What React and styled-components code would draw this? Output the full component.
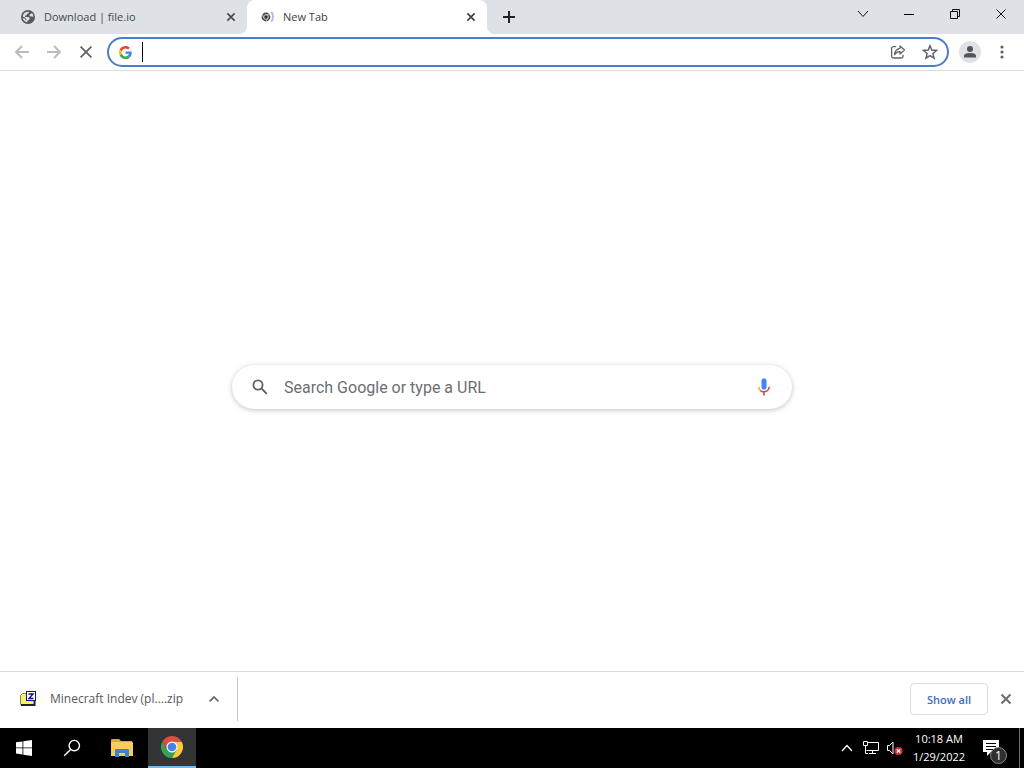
import React from "react";
import styled, { createGlobalStyle } from "styled-components";

const uiFont = '"Open Sans", "Noto Sans", sans-serif';

const GlobalStyle = createGlobalStyle`
  *, *::before, *::after { box-sizing: border-box; }
  body { margin: 0; background: #fff; font-family: ${uiFont}; }
  button, input { font: inherit; }
  svg { display: block; flex: none; }
`;

const Desktop = styled.div`
  display: flex;
  flex-direction: column;
  min-height: 100vh;
`;

const PlainButton = styled.button`
  display: flex;
  align-items: center;
  justify-content: center;
  flex: none;
  padding: 0;
  border: 0;
  background: transparent;
  color: inherit;
`;

/* Tab strip */
const TabStrip = styled.header`
  display: flex;
  height: 34px;
  background: #dee1e6;
  color: #202124;
`;

const Tab = styled.div`
  position: relative;
  display: flex;
  align-items: center;
  gap: 8px;
  flex: 0 1 ${(p) => (p.$active ? "240px" : "247px")};
  min-width: 0;
  padding: 0 8px 0 ${(p) => (p.$active ? "12px" : "20px")};
  border-radius: 8px 8px 0 0;
  background: ${(p) => (p.$active ? "#fff" : "transparent")};
  color: ${(p) => (p.$active ? "#3c4043" : "#45494d")};

  &::before, &::after {
    content: ${(p) => (p.$active ? '""' : "none")};
    position: absolute;
    bottom: 0;
    width: 8px;
    height: 8px;
  }
  &::before {
    left: -8px;
    background: radial-gradient(circle at 0 0, transparent 8px, #fff 8px);
  }
  &::after {
    right: -8px;
    background: radial-gradient(circle at 100% 0, transparent 8px, #fff 8px);
  }
`;

const TabTitle = styled.span`
  flex: 1;
  overflow: hidden;
  white-space: nowrap;
  font-size: 11px;
  line-height: 16px;
`;

const TabClose = styled(PlainButton)`
  width: 16px;
  height: 16px;
`;

const NewTabButton = styled(PlainButton)`
  width: 28px;
  height: 34px;
  margin-left: 8px;
`;

const WindowControls = styled.div`
  display: flex;
  margin-left: auto;
`;

const WindowButton = styled(PlainButton)`
  width: 46px;
  height: 28px;
  color: #111;
`;

/* Toolbar */
const Toolbar = styled.nav`
  display: flex;
  align-items: center;
  height: 37px;
  padding: 0 6px;
  border-bottom: 1px solid #dcdcdf;
  color: #5f6368;
`;

const ToolButton = styled(PlainButton)`
  width: 32px;
  height: 28px;
  color: ${(p) => (p.$dim ? "#babcbe" : "#5f6368")};
`;

const Omnibox = styled.div`
  display: flex;
  align-items: center;
  flex: 1;
  min-width: 0;
  height: 30px;
  margin: 0 5px;
  padding: 0 1px 0 10px;
  border: 2px solid #4c7ccb;
  border-radius: 15px;
`;

const Caret = styled.span`
  width: 1px;
  height: 20px;
  margin-left: 10px;
  background: #000;
`;

const AddressInput = styled.input`
  flex: 1;
  min-width: 0;
  border: 0;
  outline: 0;
  background: transparent;
  font-size: 14px;
`;

const Avatar = styled(PlainButton)`
  width: 22px;
  height: 22px;
  margin: 0 5px;
  border-radius: 50%;
  background: #dee1e6;
`;

/* New tab page */
const Page = styled.main`
  display: flex;
  align-items: center;
  justify-content: center;
  flex: 1;
  padding: 32px 24px 0;
`;

const SearchBox = styled.form`
  display: flex;
  align-items: center;
  width: 100%;
  max-width: 560px;
  height: 44px;
  padding: 0 18px 0 20px;
  border-radius: 22px;
  background: #fff;
  box-shadow: 0 1px 5px rgba(32, 33, 36, 0.28);
  color: #5f6368;
`;

const SearchInput = styled.input`
  flex: 1;
  min-width: 0;
  padding: 0 16px;
  border: 0;
  outline: 0;
  background: transparent;
  font-family: Roboto, sans-serif;
  font-size: 16px;
  &::placeholder { color: #6b6f73; opacity: 1; }
`;

/* Downloads */
const DownloadShelf = styled.section`
  display: flex;
  align-items: center;
  height: 57px;
  padding: 0 8px 2px 20px;
  border-top: 1px solid #dadce0;
`;

const DownloadItem = styled.div`
  display: flex;
  align-items: center;
  height: 44px;
  padding-right: 13px;
  border-right: 1px solid #c6c8cb;
  color: #5f6368;
`;

const FileName = styled.span`
  width: 138px;
  margin-left: 13px;
  white-space: nowrap;
  font-size: 12px;
  line-height: 18px;
  color: #55585c;
`;

const ItemMenu = styled(PlainButton)`
  width: 20px;
  height: 20px;
  margin-left: 16px;
`;

const ShowAll = styled.button`
  width: 78px;
  height: 32px;
  margin-left: auto;
  padding: 0;
  border: 1px solid #dadce0;
  border-radius: 4px;
  background: #fff;
  color: #3f6bbd;
  font-size: 11px;
  font-weight: 600;
`;

const ShelfClose = styled(PlainButton)`
  width: 20px;
  height: 20px;
  margin-left: 8px;
  color: #6a6d70;
`;

/* Taskbar */
const Taskbar = styled.footer`
  display: flex;
  height: 40px;
  background: #000;
  color: #fff;
`;

const TaskButton = styled(PlainButton)`
  width: ${(p) => (p.$wide ? "52px" : "48px")};
  height: 40px;
  background: ${(p) => (p.$active ? "#333435" : "transparent")};
  border-bottom: ${(p) => (p.$active ? "2px solid #76b9ed" : "0")};
`;

const Tray = styled.div`
  display: flex;
  align-items: center;
  margin-left: auto;
`;

const TrayButton = styled(PlainButton)`
  width: 24px;
  height: 40px;
`;

const Clock = styled.time`
  width: 64px;
  text-align: center;
  font-size: 11px;
  line-height: 18px;
  white-space: nowrap;
`;

const Notifications = styled(PlainButton)`
  position: relative;
  width: 48px;
  height: 40px;
  padding-right: 8px;
`;

const Count = styled.span`
  position: absolute;
  right: 12px;
  bottom: 4px;
  width: 17px;
  height: 17px;
  border: 1px solid #8a8a8a;
  border-radius: 50%;
  background: #303030;
  font-size: 12px;
  line-height: 15px;
`;

const DesktopEdge = styled(PlainButton)`
  width: 5px;
  height: 40px;
  border-left: 1px solid #6a6a6a;
`;

const Cross = ({ size = 8, weight = 2 }) => (
  <svg width={size} height={size} viewBox="0 0 10 10" fill="none" stroke="currentColor" strokeWidth={weight} overflow="visible">
    <path d="M.5.5l9 9M9.5.5l-9 9" />
  </svg>
);

const Globe = () => (
  <svg width="16" height="16" viewBox="0 0 16 16">
    <circle cx="8" cy="8" r="7" fill="#55585c" />
    <path d="M3 6.2C4 3.6 6.400 2.600 9 2.900L8.600 4.300 6.900 4.900 6.600 6.300 5 6.800 5.200 8H8.600L9.900 9.300 8.900 11 7.600 11.600 7.300 13.200C4.700 12.900 3 10.900 2.700 8.700L4.900 9.700 5.800 11.400 6.500 10.300 4.500 8.200 3 7.700z" fill="#dee1e6" />
    <path d="M10.600 4.700l1.500-.4c.9.900 1.300 2.100 1.300 3.400l-1.700-.3-1.800-.2-.5-1.200z" fill="#dee1e6" />
  </svg>
);

const LoadingChrome = () => (
  <svg width="16" height="16" viewBox="0 0 16 16" fill="none">
    <circle cx="7" cy="8" r="4.400" fill="#484b50" />
    <circle cx="7" cy="8" r="2.300" stroke="#d5d7db" strokeWidth=".9" />
    <circle cx="7" cy="8" r="1.200" fill="#292c30" />
    <path d="M7 5.700h4M5 9L3.300 6.200M9 9l-2 3.200" stroke="#d5d7db" strokeWidth=".8" />
    <path d="M12.200 3c2.300 2.300 2.400 7 .1 9.700" stroke="#b3b8ed" strokeWidth="1.800" />
  </svg>
);

const Arrow = ({ forward }) => (
  <svg width="16" height="16" viewBox="0 0 16 16" fill="none" stroke="currentColor" strokeWidth="2">
    <path d={forward ? "M1 8h13M8 2l6 6-6 6" : "M15 8H2M8 2L2 8l6 6"} />
  </svg>
);

const GoogleG = () => (
  <svg width="13" height="13" viewBox="0 0 48 48">
    <path fill="#ea4335" d="M24 9.5c3.5 0 6.7 1.2 9.2 3.6l6.9-6.9C35.9 2.4 30.5 0 24 0 14.6 0 6.5 5.4 2.6 13.2l8 6.2C12.4 13.7 17.7 9.5 24 9.5z" />
    <path fill="#4285f4" d="M47 24.6c0-1.6-.2-3.1-.4-4.6H24v9h12.9a11 11 0 0 1-4.8 7.2l7.7 6c4.6-4.2 7.2-10.4 7.2-17.6z" />
    <path fill="#fbbc05" d="M10.5 28.6a14.5 14.5 0 0 1 0-9.2l-8-6.2A24 24 0 0 0 0 24c0 3.9.9 7.5 2.6 10.8z" />
    <path fill="#34a853" d="M24 48c6.5 0 11.9-2.1 15.900-5.800l-7.700-6A14 14 0 0 1 24 38.500c-6.300 0-11.600-4.200-13.500-9.900l-7.900 6.200A24 24 0 0 0 24 48z" />
  </svg>
);

const Share = () => (
  <svg width="16" height="16" viewBox="0 0 16 16" fill="none" stroke="currentColor" strokeWidth="1.3" strokeLinejoin="round">
    <path d="M6.2 2.6H3.400a1.800 1.800 0 0 0-1.800 1.800v7.800A1.800 1.800 0 0 0 3.400 14h7.800a1.800 1.800 0 0 0 1.800-1.800v-1.500" />
    <path d="M10 2l4.500 4-4.500 4V7.700C7.600 7.600 6 8.500 4.500 10.700 4.800 7.600 6.400 5 10 4.400z" />
  </svg>
);

const Star = () => (
  <svg width="16" height="16" viewBox="0 0 16 16" fill="none" stroke="currentColor" strokeWidth="1.5">
    <path d="M8 1.8l1.8 4.3 4.7.4-3.6 3 1.1 4.6L8 11.6l-4 2.5 1.1-4.6-3.6-3 4.7-.4z" />
  </svg>
);

const Person = () => (
  <svg width="14" height="14" viewBox="0 0 14 14" fill="#50545b">
    <circle cx="7" cy="4" r="3" />
    <path d="M1 12.5v-1.8C1 8.6 4.6 8 7 8s6 .6 6 2.7v1.8z" />
  </svg>
);

const Microphone = () => (
  <svg width="20" height="20" viewBox="0 0 20 20" fill="none">
    <rect x="7.5" y="1.5" width="5" height="11" rx="2" fill="#4285f4" />
    <path d="M4.8 9.8c0 1.5.5 2.8 1.5 3.8" stroke="#fbbc04" strokeWidth="1.6" />
    <path d="M6.2 13.5c2.5 2.3 8.5 1.8 9-3.7" stroke="#ea4335" strokeWidth="1.6" />
    <path d="M10 15.2v3.3" stroke="#ad5549" strokeWidth="1.6" />
  </svg>
);

const ZipFile = () => (
  <svg width="17" height="16" viewBox="0 0 17 16">
    <path d="M.5 4.500l2-2H7v11H.5z" fill="#f2ee70" stroke="#8b8a45" />
    <path d="M1 14h13.500V10" fill="none" stroke="#222" strokeWidth="2" />
    <path d="M1 5h12v8H1z" fill="#f5f078" />
    <rect x="6.500" y=".5" width="9" height="9" fill="#fff" stroke="#10108a" />
    <path d="M8.500 3H13L9 7.500h4.500" fill="none" stroke="#10108a" strokeWidth="1.400" />
  </svg>
);

const WindowsLogo = () => (
  <svg width="16" height="16" viewBox="0 0 16 16" fill="#fff">
    <path d="M0 2.3L6.5 1.4v6.1H0zM7.3 1.3L16 0v7.5H7.3zM0 8.3h6.5v6.2L0 13.6zM7.3 8.3H16V16l-8.7-1.3z" />
  </svg>
);

const TaskSearch = () => (
  <svg width="18" height="18" viewBox="0 0 18 18" fill="none" stroke="#fff" strokeWidth="1.4">
    <circle cx="11.3" cy="6.6" r="5.2" /><path d="M7.6 10.4L1.2 16.8" />
  </svg>
);

const Folder = () => (
  <svg width="22" height="20" viewBox="0 0 22 20">
    <path d="M0 2q0-1 1-1h7l2 2h11v15H0z" fill="#e6a82c" />
    <path d="M1 4h20q1 0 1 1v13H0V5q0-1 1-1z" fill="#f8cd5e" />
    <path d="M4 19v-7q0-1 1-1h12q1 0 1 1v7h-4v-4H8v4z" fill="#3c86c5" />
  </svg>
);

const ChromeLogo = () => (
  <svg width="22" height="22" viewBox="0 0 48 48">
    <path fill="#35a057" d="M24 48A24 24 0 0 1 3.200 12L13.600 30H34.400z" />
    <path fill="#fbcb3c" d="M24 12H44.800A24 24 0 0 1 24 48L34.400 30z" />
    <path fill="#de4b3f" d="M3.200 12A24 24 0 0 1 44.800 12H24L13.600 30z" />
    <circle cx="24" cy="24" r="12" fill="#fff" />
    <circle cx="24" cy="24" r="9.500" fill="#4384e8" />
  </svg>
);

const Network = () => (
  <svg width="18" height="16" viewBox="0 0 18 16" fill="none" stroke="#fff">
    <path d="M5.500 2.500h11v8h-12M10.500 10.500v3M7 13.500h7M1.500 1.500h4v4h-4zM3.500 5.500v8H6" />
  </svg>
);

const Muted = () => (
  <svg width="18" height="16" viewBox="0 0 18 16" fill="none">
    <path d="M1.5 5.5h2l3.5-3.5v12L3.5 10.5h-2z" stroke="#fff" />
    <circle cx="12.5" cy="11" r="4" fill="#cf3442" />
    <path d="M10.8 9.3l3.4 3.4M14.2 9.3l-3.4 3.4" stroke="#fff" strokeWidth="1.2" />
  </svg>
);

export default function App() {
  return (
    <>
      <GlobalStyle />
      <Desktop>
        <TabStrip>
          <Tab>
            <Globe />
            <TabTitle>Download | file.io</TabTitle>
            <TabClose aria-label="Close Download tab"><Cross /></TabClose>
          </Tab>
          <Tab $active>
            <LoadingChrome />
            <TabTitle>New Tab</TabTitle>
            <TabClose aria-label="Close New Tab"><Cross /></TabClose>
          </Tab>
          <NewTabButton aria-label="New tab">
            <svg width="12" height="12" viewBox="0 0 12 12" stroke="currentColor" strokeWidth="2"><path d="M6 0v12M0 6h12" /></svg>
          </NewTabButton>
          <WindowControls>
            <WindowButton aria-label="Search tabs">
              <svg width="12" height="8" viewBox="0 0 12 8" fill="none" stroke="currentColor"><path d="M1 1l5 5.5L11 1" /></svg>
            </WindowButton>
            <WindowButton aria-label="Minimize">
              <svg width="10" height="2" viewBox="0 0 10 2"><path d="M0 1h10v1H0z" /></svg>
            </WindowButton>
            <WindowButton aria-label="Restore">
              <svg width="10" height="10" viewBox="0 0 10 10" fill="none" stroke="currentColor"><path d="M.5 2.5h7v7h-7zM2.5 2.5v-2h7v7h-2" /></svg>
            </WindowButton>
            <WindowButton aria-label="Close window"><Cross size={10} weight={1} /></WindowButton>
          </WindowControls>
        </TabStrip>

        <Toolbar aria-label="Browser toolbar">
          <ToolButton $dim aria-label="Back"><Arrow /></ToolButton>
          <ToolButton $dim aria-label="Forward"><Arrow forward /></ToolButton>
          <ToolButton aria-label="Stop loading"><Cross size={12} weight={1.5} /></ToolButton>
          <Omnibox>
            <GoogleG />
            <Caret />
            <AddressInput aria-label="Address and search bar" />
            <ToolButton aria-label="Share this page"><Share /></ToolButton>
            <ToolButton aria-label="Bookmark this page"><Star /></ToolButton>
          </Omnibox>
          <Avatar aria-label="Profile"><Person /></Avatar>
          <ToolButton aria-label="Browser menu">
            <svg width="4" height="14" viewBox="0 0 4 14" fill="currentColor"><circle cx="2" cy="2" r="1.6" /><circle cx="2" cy="7" r="1.6" /><circle cx="2" cy="12" r="1.6" /></svg>
          </ToolButton>
        </Toolbar>

        <Page>
          <SearchBox role="search">
            <svg width="16" height="16" viewBox="0 0 16 16" fill="none" stroke="currentColor" strokeWidth="1.8"><circle cx="6" cy="6" r="4.6" /><path d="M9.5 9.5l5.3 5.3" /></svg>
            <SearchInput type="search" aria-label="Search" placeholder="Search Google or type a URL" />
            <PlainButton type="button" aria-label="Search by voice"><Microphone /></PlainButton>
          </SearchBox>
        </Page>

        <DownloadShelf aria-label="Downloads">
          <DownloadItem>
            <ZipFile />
            <FileName>Minecraft Indev (pl....zip</FileName>
            <ItemMenu aria-label="Download options">
              <svg width="10" height="6" viewBox="0 0 10 6" fill="none" stroke="currentColor" strokeWidth="1.6"><path d="M.6 5.4L5 1l4.4 4.4" /></svg>
            </ItemMenu>
          </DownloadItem>
          <ShowAll>Show all</ShowAll>
          <ShelfClose aria-label="Close downloads"><Cross size={10} /></ShelfClose>
        </DownloadShelf>

        <Taskbar>
          <TaskButton aria-label="Start"><WindowsLogo /></TaskButton>
          <TaskButton aria-label="Search Windows"><TaskSearch /></TaskButton>
          <TaskButton $wide aria-label="File Explorer"><Folder /></TaskButton>
          <TaskButton $active aria-label="Google Chrome"><ChromeLogo /></TaskButton>
          <Tray>
            <TrayButton aria-label="Show hidden icons">
              <svg width="12" height="8" viewBox="0 0 12 8" fill="none" stroke="#fff" strokeWidth="1.3"><path d="M1 7l5-5.5L11 7" /></svg>
            </TrayButton>
            <TrayButton aria-label="Network"><Network /></TrayButton>
            <TrayButton aria-label="Volume muted"><Muted /></TrayButton>
            <Clock>10:18 AM<br />1/29/2022</Clock>
            <Notifications aria-label="1 notification">
              <svg width="16" height="16" viewBox="0 0 16 16"><path d="M0 0h16v12H8l-4 4v-4H0z" fill="#fff" /><path d="M3 3.5h10M3 6.5h10M3 9.5h7" stroke="#000" /></svg>
              <Count>1</Count>
            </Notifications>
            <DesktopEdge aria-label="Show desktop" />
          </Tray>
        </Taskbar>
      </Desktop>
    </>
  );
}
